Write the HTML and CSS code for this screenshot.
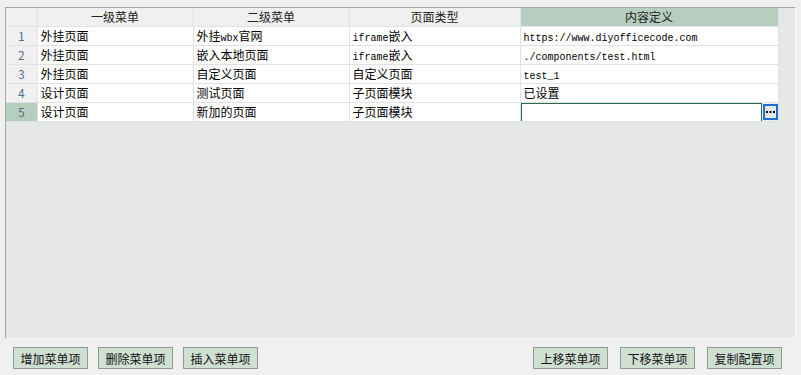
FILE: index.html
```html
<!DOCTYPE html>
<html lang="zh">
<head>
  <meta charset="UTF-8" />
  <title>菜单配置</title>
  <link rel="stylesheet" href="styles.css">
</head>
<body>
  <div class="grid-wrap">
    <table class="grid">
      <colgroup>
        <col class="c-num"><col class="c-1"><col class="c-2"><col class="c-3"><col class="c-4">
      </colgroup>
      <thead>
        <tr><th></th><th>一级菜单</th><th>二级菜单</th><th>页面类型</th><th class="active">内容定义</th></tr>
      </thead>
      <tbody>
        <tr><td class="num">1</td><td>外挂页面</td><td>外挂<span class="mono">wbx</span>官网</td><td><span class="mono">iframe</span>嵌入</td><td><span class="mono">https://www.diyofficecode.com</span></td></tr>
        <tr><td class="num">2</td><td>外挂页面</td><td>嵌入本地页面</td><td><span class="mono">iframe</span>嵌入</td><td><span class="mono">./components/test.html</span></td></tr>
        <tr><td class="num">3</td><td>外挂页面</td><td>自定义页面</td><td>自定义页面</td><td><span class="mono">test_1</span></td></tr>
        <tr><td class="num">4</td><td>设计页面</td><td>测试页面</td><td>子页面模块</td><td>已设置</td></tr>
        <tr class="current"><td class="num">5</td><td>设计页面</td><td>新加的页面</td><td>子页面模块</td>
          <td class="editing"><div class="editor"><input type="text" /><span class="pick"><svg width="11" height="12" viewBox="0 0 11 12"><rect x="1" y="5" width="2" height="2" fill="#000"/><rect x="4.5" y="5" width="2" height="2" fill="#000"/><rect x="8" y="5" width="2" height="2" fill="#000"/></svg></span></div></td></tr>
      </tbody>
    </table>
  </div>
  <div class="toolbar">
    <div class="group">
      <button>增加菜单项</button>
      <button>删除菜单项</button>
      <button>插入菜单项</button>
    </div>
    <div class="group">
      <button>上移菜单项</button>
      <button>下移菜单项</button>
      <button>复制配置项</button>
    </div>
  </div>
</body>
</html>
```
FILE: styles.css
```css
body {
  margin: 0;
  background: #f0f0f0;
  font-family: "Noto Sans CJK SC", sans-serif;
  font-size: 12px;
  color: #000;
}
.grid-wrap {
  margin: 7px 5px 0 5px;
  height: 330px;
  border: 1px solid #a8a8a8;
  border-right-color: #f8f8f8;
  border-bottom-color: #f8f8f8;
  background: #e6e7e8;
}
.grid {
  border-collapse: collapse;
  table-layout: fixed;
  width: 772px;
}
.c-num { width: 31px; }
.c-1 { width: 156px; }
.c-2 { width: 156px; }
.c-3 { width: 171px; }
.c-4 { width: 258px; }
.grid th, .grid td {
  height: 18px;
  padding: 0 0 0 3px;
  border: 1px solid #dfe1e2;
  white-space: nowrap;
  overflow: hidden;
  line-height: 18px;
}
.grid tr:first-child th { border-top: none; }
.grid th:first-child, .grid td:first-child { border-left: none; }
.grid th {
  background: #f0f0f0;
  font-weight: normal;
  color: #222;
  text-align: center;
  padding: 0;
  border-color: #e2e2e2;
}
.grid th.active {
  background: #b5cebf;
}
.grid td {
  background: #fff;
}
.grid td.num {
  background: #f0f0f0;
  color: #56708c;
  text-align: center;
  padding: 0;
}
.grid tr.current td.num {
  background: #b5cebf;
}
.mono {
  font-family: "Liberation Mono", monospace;
  font-size: 10px;
  line-height: 10px;
}
.grid td.editing {
  padding: 0;
  background: #e9f2ec;
}
.editor {
  display: flex;
  align-items: center;
  height: 18px;
}
.editor input {
  box-sizing: border-box;
  width: 242px;
  height: 19px;
  margin: 0;
  border: 1px solid #2f6a4a;
  background: #fff;
  outline: none;
}
.pick {
  box-sizing: border-box;
  display: flex;
  align-items: center;
  justify-content: center;
  width: 15px;
  height: 16px;
  margin-left: 1px;
  border: 2px solid #1d6fd1;
  background: #e4e4e4;
}
.toolbar {
  display: flex;
  justify-content: space-between;
  padding: 8px 19px 0 13px;
}
.group {
  display: flex;
  gap: 10px;
}
.group + .group { gap: 12px; }
.toolbar button {
  width: 75px;
  height: 22px;
  padding: 0;
  border: 1px solid #8c9d8f;
  background: #cfe0d3;
  font-family: "Noto Sans CJK SC", sans-serif;
  font-size: 12px;
  color: #111;
}
```
